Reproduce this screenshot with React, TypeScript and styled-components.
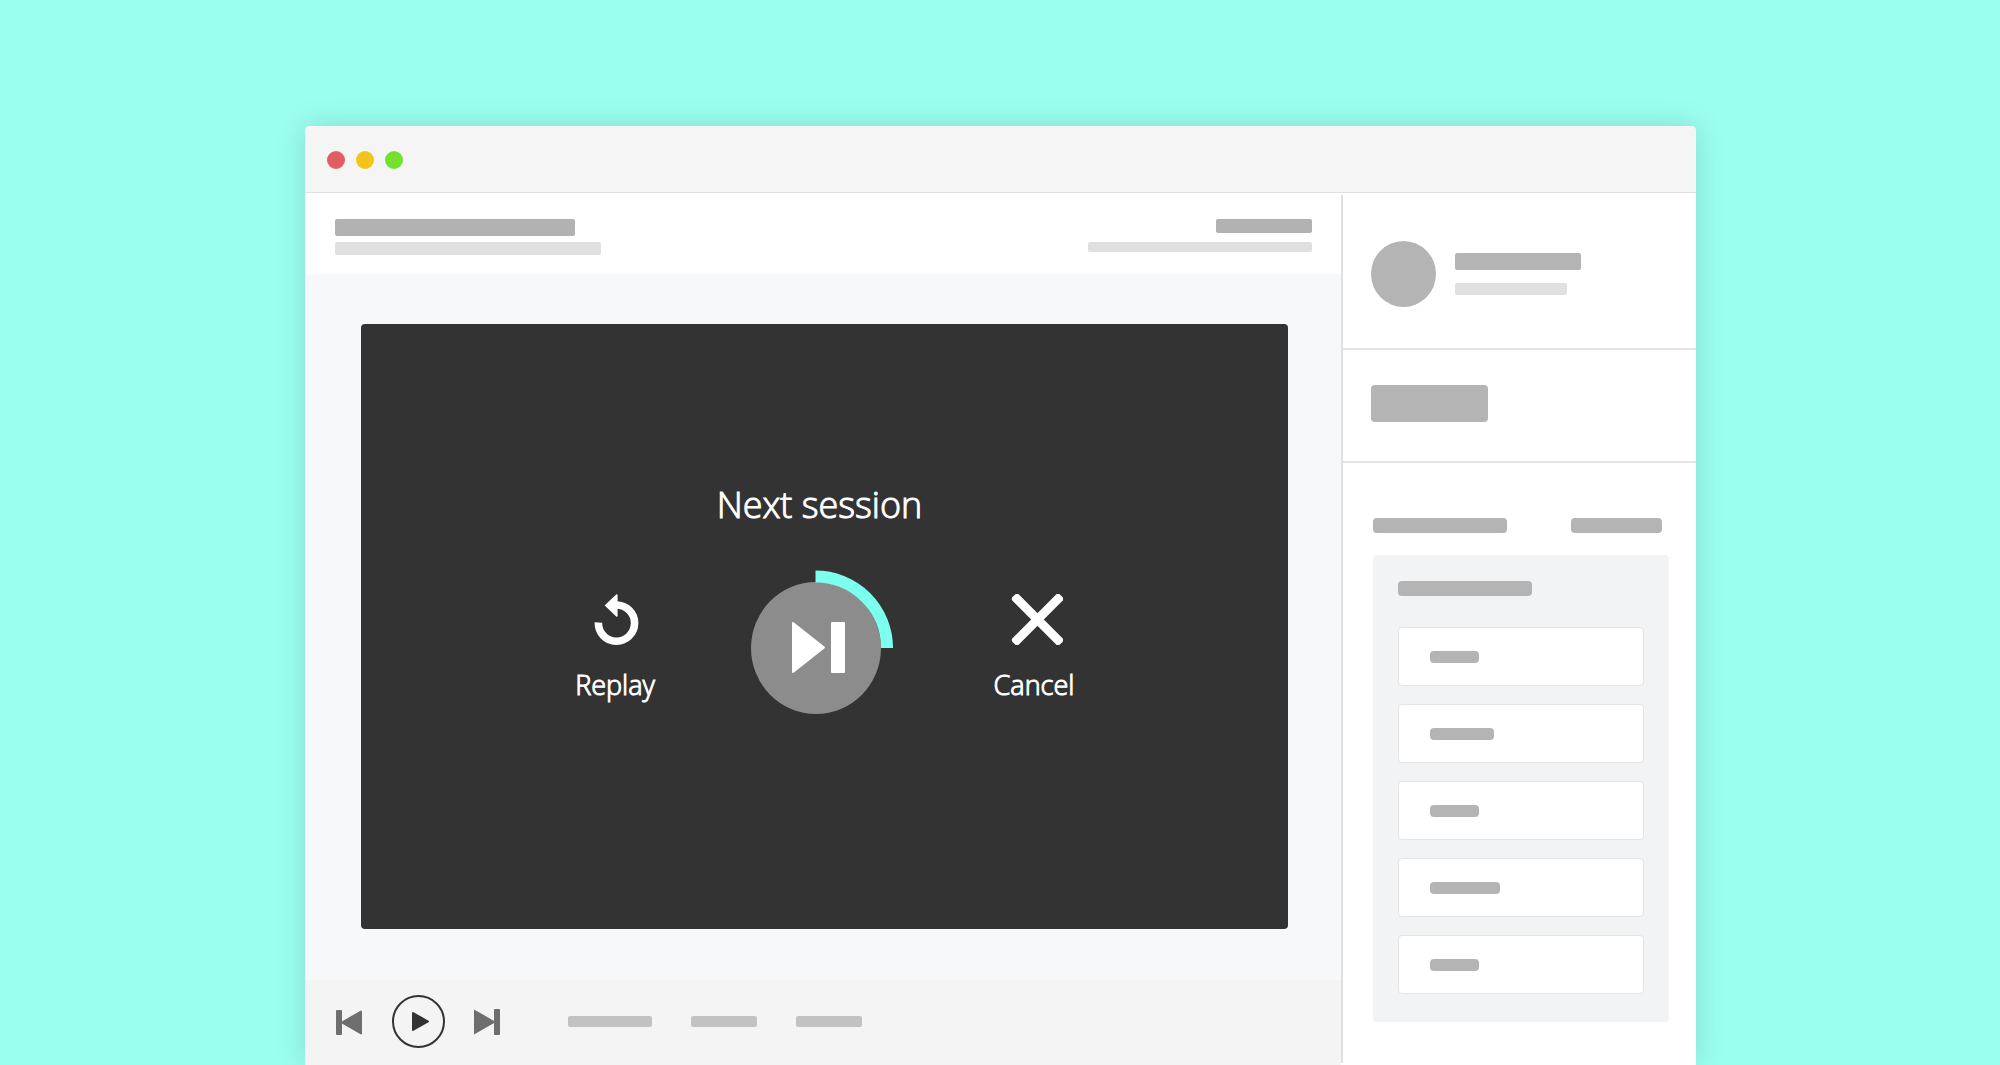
import React from "react";
import styled, { createGlobalStyle } from "styled-components";

const GlobalStyle = createGlobalStyle`
  *, *::before, *::after { box-sizing: border-box; }
  body { margin: 0; background: #9bfff0; }
  button { font: inherit; color: inherit; background: none; border: 0; padding: 0; cursor: pointer; }
  h2, ul { margin: 0; padding: 0; font-weight: inherit; }
  ul { list-style: none; }
  svg { display: block; }
`;

const Page = styled.div`
  display: flex;
  min-height: 100vh;
  padding: 126px 304px 0 305px;
  overflow: hidden;
  background: #9bfff0;
  font-family: "Open Sans", "Noto Sans", sans-serif;
  font-weight: 300;
`;

const Window = styled.div`
  flex: 1;
  display: flex;
  flex-direction: column;
  background: #fff;
  border-radius: 5px 5px 0 0;
  box-shadow: 0 0 30px rgba(0, 0, 0, 0.15);
`;

const TitleBar = styled.header`
  display: flex;
  align-items: center;
  gap: 11px;
  height: 67px;
  padding: 1px 0 0 22px;
  background: #f5f5f5;
  border-bottom: 1px solid #e0e0e0;
  border-radius: 5px 5px 0 0;
`;

const Dot = styled.button<{ $color: string }>`
  width: 18px;
  height: 18px;
  border-radius: 50%;
  background: ${(p) => p.$color};
`;

const Columns = styled.div`
  flex: 1;
  display: flex;
`;

const Main = styled.main`
  flex: 1;
  display: flex;
  flex-direction: column;
`;

const Bar = styled.div<{ $w: number; $h: number; $tone?: string; $radius?: number }>`
  width: ${(p) => p.$w}px;
  height: ${(p) => p.$h}px;
  background: ${(p) => p.$tone ?? "#b4b4b4"};
  border-radius: ${(p) => p.$radius ?? 2}px;
`;

const CourseHeader = styled.div`
  display: flex;
  justify-content: space-between;
  height: 81px;
  padding: 26px 29px 0 30px;
`;

const BarStack = styled.div<{ $gap: number; $end?: boolean }>`
  display: flex;
  flex-direction: column;
  align-items: ${(p) => (p.$end ? "flex-end" : "flex-start")};
  gap: ${(p) => p.$gap}px;
`;

const Stage = styled.div`
  flex: 1;
  display: flex;
  padding: 50px 53px 51px 56px;
  background: #f6f8fa;
`;

const Player = styled.section`
  flex: 1;
  display: flex;
  flex-direction: column;
  align-items: center;
  justify-content: center;
  gap: 41px;
  padding-bottom: 58px;
  border-radius: 4px;
  background: #333;
  color: #fff;
  -webkit-text-stroke: 1px #fff;
`;

const Title = styled.h2`
  padding-right: 10px;
  font-size: 36px;
  line-height: 48px;
`;

const Actions = styled.div`
  display: flex;
  align-items: flex-end;
  gap: 91px;
`;

const Action = styled.button`
  display: flex;
  flex-direction: column;
  align-items: center;
  gap: 22px;
  width: 90px;
  padding-bottom: 11px;
  font-size: 27px;
  line-height: 36px;
`;

const Transport = styled.footer`
  display: flex;
  align-items: center;
  height: 85px;
  padding: 0 30px 2px 31px;
  background: #f4f4f4;
`;

const TransportButtons = styled.div`
  display: flex;
  align-items: center;
  gap: 29px;
`;

const TransportBars = styled.div`
  display: flex;
  gap: 39px;
  margin-left: 67px;
`;

const Sidebar = styled.aside`
  width: 355px;
  margin: 2px 0;
  border-left: 2px solid #e0e0e0;
`;

const Profile = styled.section`
  display: flex;
  align-items: center;
  gap: 19px;
  padding: 46px 28px 41px;
  border-bottom: 2px solid #e4e4e4;
`;

const Avatar = styled.div`
  width: 65px;
  height: 66px;
  border-radius: 50%;
  background: #b4b4b4;
`;

const Callout = styled.section`
  padding: 35px 28px 39px;
  border-bottom: 2px solid #e4e4e4;
`;

const Outline = styled.section`
  padding: 55px 27px 0 30px;
`;

const OutlineHead = styled.div`
  display: flex;
  justify-content: space-between;
  padding: 0 7px 22px 0;
`;

const Panel = styled.div`
  padding: 26px 25px 28px;
  border-radius: 4px;
  background: #f1f3f5;
`;

const Lessons = styled.ul`
  display: flex;
  flex-direction: column;
  gap: 18px;
  padding-top: 31px;
`;

const Lesson = styled.li`
  display: flex;
  align-items: center;
  height: 59px;
  padding-left: 31px;
  border: 1px solid #e4e4e4;
  border-radius: 4px;
  background: #fff;
`;

const lessons = [49, 64, 49, 70, 49];

const ReplayIcon = () => (
  <svg width="53" height="51" viewBox="-2 0 53 51" aria-hidden="true">
    <path d="M7.4 28.5A18.1 18.1 0 1 0 25.5 11" fill="none" stroke="#fff" strokeWidth="7.6" />
    <path d="M14 11.1 25.2.4q1.4-.7 1.4.6v20.8q0 1.3-1.4.6L14 11.7q-.3-.3 0-.6z" fill="#fff" />
  </svg>
);

const NextIcon = () => (
  <svg width="147" height="144" viewBox="0 0 147 144" aria-hidden="true">
    <ellipse cx="65" cy="78" rx="65" ry="66" fill="#8c8c8c" />
    <path d="M64.5 6.5A71.5 71.5 0 0 1 136 78" fill="none" stroke="#7dfff0" strokeWidth="12" />
    <path d="M42 53 73 77.5 42 102z" fill="#fff" stroke="#fff" strokeWidth="2" strokeLinejoin="round" />
    <rect x="80" y="52" width="14" height="51" rx="1" fill="#fff" />
  </svg>
);

const CancelIcon = () => (
  <svg width="57" height="51" viewBox="-6 0 57 51" aria-hidden="true">
    <g fill="#fff" transform="rotate(45 25.5 25.5)">
      <rect x="-8" y="21" width="67" height="9" rx="3" />
      <rect x="21" y="-8" width="9" height="67" rx="3" />
    </g>
  </svg>
);

const PreviousTrackIcon = () => (
  <svg width="26" height="26" viewBox="0 0 26 26" aria-hidden="true" fill="#6e6e6e">
    <rect x="0" y="1" width="6" height="25" rx="1" />
    <path d="M6 13.5 25 2.5v22z" stroke="#6e6e6e" strokeWidth="2" strokeLinejoin="round" />
  </svg>
);

const PlayIcon = () => (
  <svg width="54" height="54" viewBox="0 0 54 54" aria-hidden="true">
    <circle cx="27.5" cy="26.5" r="25.5" fill="none" stroke="#333" strokeWidth="2" />
    <path d="M22 18 37 26.5 22 35z" fill="#333" stroke="#333" strokeWidth="2" strokeLinejoin="round" />
  </svg>
);

const NextTrackIcon = () => (
  <svg width="27" height="26" viewBox="1 0 27 26" aria-hidden="true" fill="#6e6e6e">
    <path d="M1 1.5 21 13 1 24.5z" stroke="#6e6e6e" strokeWidth="2" strokeLinejoin="round" overflow="visible" />
    <rect x="21" y="0" width="6" height="26" rx="1" />
  </svg>
);

export default function App() {
  return (
    <>
      <GlobalStyle />
      <Page>
        <Window>
          <TitleBar>
            <Dot $color="#e15d61" aria-label="Close window" />
            <Dot $color="#f2c51c" aria-label="Minimise window" />
            <Dot $color="#73e22f" aria-label="Maximise window" />
          </TitleBar>
          <Columns>
            <Main>
              <CourseHeader>
                <BarStack $gap={6}>
                  <Bar $w={240} $h={17} $tone="#b2b2b2" />
                  <Bar $w={266} $h={13} $tone="#e0e0e0" />
                </BarStack>
                <BarStack $gap={9} $end>
                  <Bar $w={96} $h={14} $tone="#b2b2b2" />
                  <Bar $w={224} $h={10} $tone="#e0e0e0" />
                </BarStack>
              </CourseHeader>
              <Stage>
                <Player>
                  <Title>Next session</Title>
                  <Actions>
                    <Action>
                      <ReplayIcon />
                      Replay
                    </Action>
                    <button aria-label="Play next session">
                      <NextIcon />
                    </button>
                    <Action>
                      <CancelIcon />
                      Cancel
                    </Action>
                  </Actions>
                </Player>
              </Stage>
              <Transport>
                <TransportButtons>
                  <button aria-label="Previous">
                    <PreviousTrackIcon />
                  </button>
                  <button aria-label="Play">
                    <PlayIcon />
                  </button>
                  <button aria-label="Next">
                    <NextTrackIcon />
                  </button>
                </TransportButtons>
                <TransportBars>
                  <Bar $w={84} $h={11} $tone="#c2c2c2" />
                  <Bar $w={66} $h={11} $tone="#c2c2c2" />
                  <Bar $w={66} $h={11} $tone="#c2c2c2" />
                </TransportBars>
              </Transport>
            </Main>
            <Sidebar>
              <Profile>
                <Avatar />
                <BarStack $gap={13}>
                  <Bar $w={126} $h={17} />
                  <Bar $w={112} $h={12} $tone="#e0e0e0" />
                </BarStack>
              </Profile>
              <Callout>
                <Bar $w={117} $h={37} $radius={4} />
              </Callout>
              <Outline>
                <OutlineHead>
                  <Bar $w={134} $h={15} $radius={4} />
                  <Bar $w={91} $h={15} $radius={4} />
                </OutlineHead>
                <Panel>
                  <Bar $w={134} $h={15} $radius={4} />
                  <Lessons>
                    {lessons.map((width, i) => (
                      <Lesson key={i}>
                        <Bar $w={width} $h={12} $radius={4} />
                      </Lesson>
                    ))}
                  </Lessons>
                </Panel>
              </Outline>
            </Sidebar>
          </Columns>
        </Window>
      </Page>
    </>
  );
}
